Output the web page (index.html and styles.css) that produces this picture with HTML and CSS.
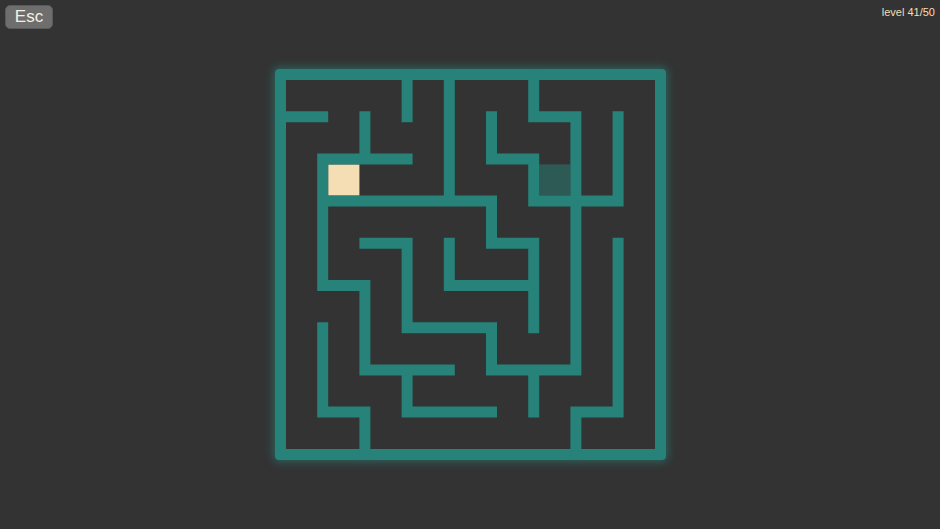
FILE: index.html
```html
<!DOCTYPE html>
<html lang="en">
<head>
<meta charset="utf-8">
<title>Maze</title>
<link rel="stylesheet" href="styles.css">
</head>
<body>
<div class="screen">
  <header class="topbar">
    <button class="esc">Esc</button>
    <span class="level">level 41/50</span>
  </header>
  <main class="stage">
    <div class="maze">
      <svg class="walls" viewBox="5.5 5.5 369 369" width="369" height="369">
        <g transform="scale(42.2)" fill="none" stroke="#278279" stroke-width="0.2607" stroke-linecap="square">
          <rect class="goal" x="6.13" y="2.13" width="0.74" height="0.74" fill="#2e5a56" stroke="none"/>
          <rect x="1.13" y="2.13" width="0.74" height="0.74" fill="#f5deb3" stroke="none"/>
          <path d="M3 0V1 M4 0V3 M6 0V1H7V7 M0 1H1 M2 1V2 M1 2H3 M5 1V2H6V3 M8 1V3 M1 3H5 M6 3H8 M1 2V5H2V7H4 M2 4H3V6H5V7H7 M5 3V4H6V6 M4 4V5H6 M1 6V8H2V9 M3 7V8H5 M6 7V8 M8 4V8H7V9"/>
        </g>
      </svg>
    </div>
  </main>
</div>
</body>
</html>
```
FILE: styles.css
```css
html, body {
  margin: 0;
  padding: 0;
  height: 100%;
}
body {
  background: #333333;
  font-family: "Liberation Sans", Arial, sans-serif;
  overflow: hidden;
}
.screen {
  position: relative;
  width: 100%;
  height: 100%;
  display: flex;
  flex-direction: column;
}
.topbar {
  position: absolute;
  top: 0;
  left: 0;
  right: 0;
  display: flex;
  justify-content: space-between;
  align-items: flex-start;
  padding: 5px 5px 0 5px;
}
.esc {
  width: 48px;
  height: 24px;
  padding: 0 0 1px 0;
  background: #6e6e6e;
  border: 1px solid #5a5a5a;
  border-radius: 5px;
  color: #f6f0e2;
  font-family: "Liberation Sans", Arial, sans-serif;
  font-size: 17px;
  line-height: 20px;
}
.level {
  color: #f5deb3;
  font-size: 11px;
  line-height: 14px;
  margin-top: 0;
}
.stage {
  flex: 1;
  display: flex;
  align-items: center;
  justify-content: center;
}
.maze {
  width: 369px;
  height: 369px;
  border: 11px solid #278279;
  border-radius: 4px;
  box-shadow: 0 0 9px 2px rgba(39, 130, 121, 0.6);
  margin-top: -1px;
}
.walls {
  display: block;
  overflow: visible;
}
```
